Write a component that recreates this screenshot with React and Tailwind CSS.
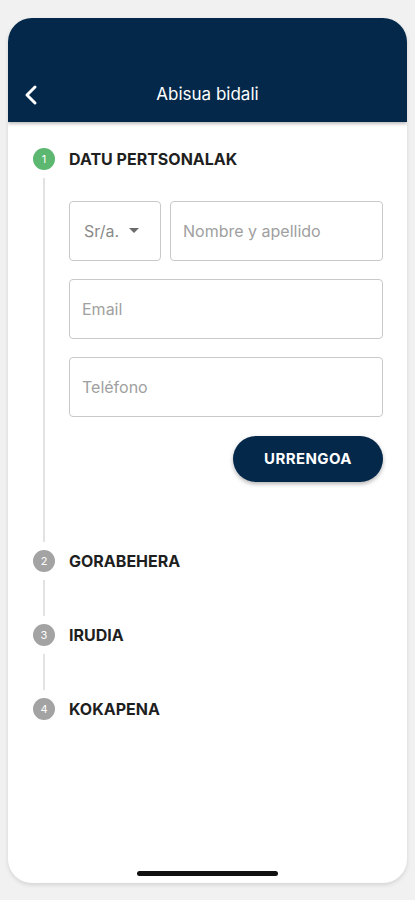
import { useState } from "react";

function StepCircle({ n, active }) {
  return (
    <div
      className={`w-[22px] h-[22px] rounded-full flex items-center justify-center text-[11px] text-white shrink-0 ${
        active ? "bg-[#5cb870]" : "bg-[#a3a3a3]"
      }`}
    >
      {n}
    </div>
  );
}

function Step({ n, label, active, last, children, lineHeight }) {
  return (
    <div className="flex">
      <div className="flex flex-col items-center w-[22px]">
        <StepCircle n={n} active={active} />
        {!last && <div className="w-[2px] bg-[#e2e2e2] my-[8px] flex-1" style={{ minHeight: lineHeight }} />}
      </div>
      <div className="flex-1 ml-[14px]">
        <div className="h-[22px] flex items-center text-[16px] font-bold text-[#1f1f1f]">
          {label}
        </div>
        {children}
      </div>
    </div>
  );
}

function Field({ placeholder, className = "" }) {
  return (
    <div
      className={`h-[60px] border border-[#c9c9c9] rounded-[4px] flex items-center px-[12px] text-[16px] text-[#a0a0a0] ${className}`}
    >
      {placeholder}
    </div>
  );
}

export default function App() {
  const [step] = useState(1);

  return (
    <div className="min-h-[900px] bg-[#f1f1f1] px-[8px] pt-[18px] pb-[17px] font-['Inter',sans-serif]">
      <div className="h-[865px] bg-white rounded-[24px] overflow-hidden shadow-[0_2px_4px_rgba(0,0,0,0.12)] flex flex-col">
        <div className="h-[104px] bg-[#03284a] flex items-end shadow-[0_2px_3px_rgba(0,0,0,0.25)] relative z-10">
          <div className="h-[54px] w-full flex items-center relative">
            <svg className="absolute left-[15px]" width="18" height="22" viewBox="0 0 18 22" fill="none">
              <polyline points="12,3 4,11 12,19" stroke="white" strokeWidth="3" strokeLinecap="round" strokeLinejoin="round" />
            </svg>
            <div className="w-full text-center text-white text-[17px]">Abisua bidali</div>
          </div>
        </div>

        <div className="flex-1 pt-[26px] pl-[25px] pr-[24px]">
          <Step n="1" label="DATU PERTSONALAK" active={step === 1}>
            <div className="pt-[31px] pb-[68px] flex flex-col">
              <div className="flex gap-[9px]">
                <div className="w-[92px] h-[60px] border border-[#c9c9c9] rounded-[4px] flex items-center pl-[14px] text-[16px] text-[#8a8a8a]">
                  Sr/a.
                  <svg className="ml-[10px]" width="10" height="6" viewBox="0 0 10 6">
                    <polygon points="0,0 10,0 5,5" fill="#6b6b6b" />
                  </svg>
                </div>
                <Field placeholder="Nombre y apellido" className="flex-1" />
              </div>
              <Field placeholder="Email" className="mt-[18px]" />
              <Field placeholder="Teléfono" className="mt-[18px]" />
              <div className="flex justify-end mt-[19px]">
                <button className="w-[150px] h-[46px] rounded-full bg-[#03284a] text-white text-[15px] font-bold tracking-[0.4px] shadow-[0_2px_4px_rgba(0,0,0,0.3)]">
                  URRENGOA
                </button>
              </div>
            </div>
          </Step>
          <Step n="2" label="GORABEHERA" lineHeight={36}>
            <div className="h-[52px]" />
          </Step>
          <Step n="3" label="IRUDIA" lineHeight={36}>
            <div className="h-[52px]" />
          </Step>
          <Step n="4" label="KOKAPENA" last />
        </div>

        <div className="flex justify-center pb-[7px]">
          <div className="w-[141px] h-[5px] rounded-full bg-[#111]" />
        </div>
      </div>
    </div>
  );
}
